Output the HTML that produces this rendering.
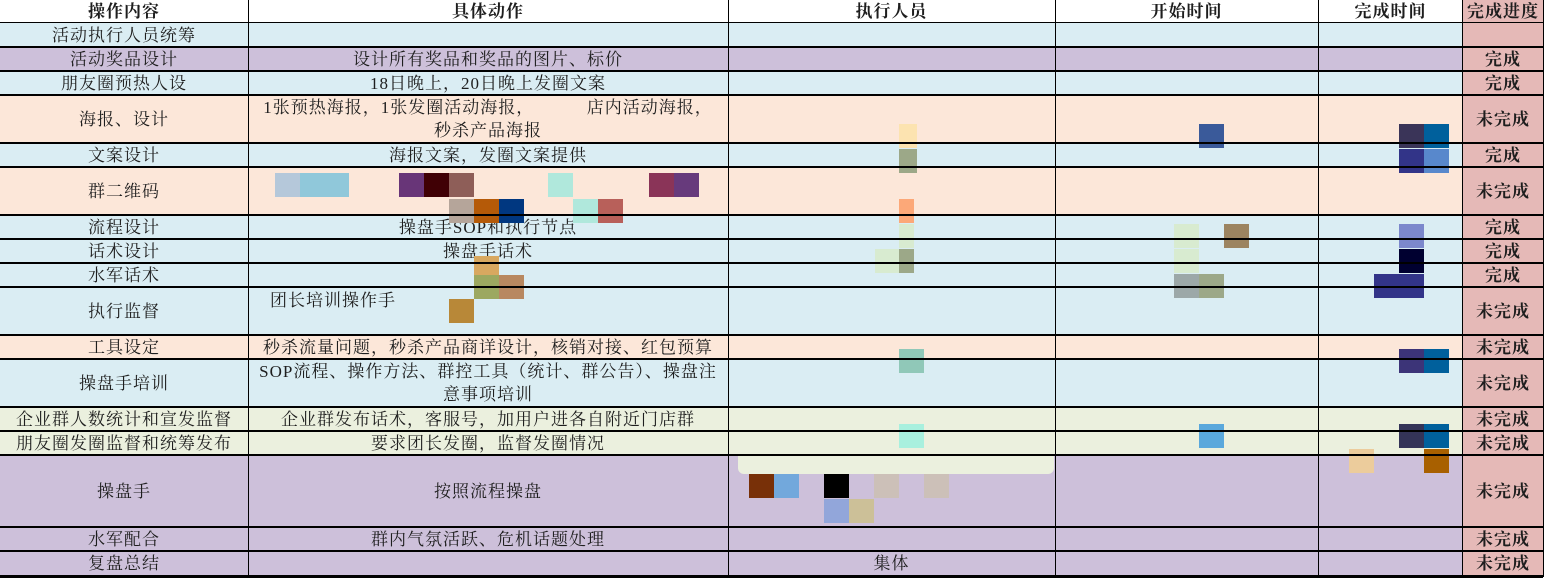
<!DOCTYPE html>
<html><head><meta charset="utf-8"><style>
body{margin:0;width:1548px;height:581px;background:#fff;position:relative;overflow:hidden;font-family:"Liberation Serif","Noto Serif CJK SC",serif;color:#1e1e1e;}
.r{position:absolute;left:0;width:1543px;}
.c{position:absolute;top:0;bottom:0;display:flex;align-items:center;justify-content:center;text-align:center;font-size:17px;letter-spacing:1px;line-height:23px;}
.c1{left:0;width:248px}.c2{left:248px;width:480px}.c3{left:728px;width:327px}
.c6{left:1463px;width:80px;background:#e5b9b7;font-weight:bold}
.hl{position:absolute;left:0;width:1543px;height:2px;background:#000}
.vl{position:absolute;top:0;height:577px;width:1px;background:#000}
.h{font-weight:bold}
.m{position:absolute;width:25px;height:24px}
</style></head><body>
<div class="r" style="top:0;height:23px;background:#fff">
<div class="c c1 h">操作内容</div><div class="c c2 h">具体动作</div><div class="c c3 h">执行人员</div>
<div class="c h" style="left:1055px;width:263px">开始时间</div><div class="c h" style="left:1318px;width:145px">完成时间</div>
<div class="c c6">完成进度</div></div>

<div class="r" style="top:23px;height:24px;background:#daedf3"><div class="c c1">活动执行人员统筹</div><div class="c c6"></div></div>
<div class="r" style="top:47px;height:24px;background:#cdc0da"><div class="c c1">活动奖品设计</div><div class="c c2">设计所有奖品和奖品的图片、标价</div><div class="c c6">完成</div></div>
<div class="r" style="top:71px;height:24px;background:#daedf3"><div class="c c1">朋友圈预热人设</div><div class="c c2">18日晚上，20日晚上发圈文案</div><div class="c c6">完成</div></div>
<div class="r" style="top:95px;height:48px;background:#fce7d9"><div class="c c1">海报、设计</div><div class="c c2">1张预热海报，1张发圈活动海报，&nbsp;&nbsp;&nbsp;&nbsp;&nbsp;&nbsp;&nbsp;&nbsp;&nbsp;&nbsp;店内活动海报，<br>秒杀产品海报</div><div class="c c6">未完成</div></div>
<div class="r" style="top:143px;height:24px;background:#daedf3"><div class="c c1">文案设计</div><div class="c c2">海报文案，发圈文案提供</div><div class="c c6">完成</div></div>
<div class="r" style="top:167px;height:48px;background:#fce7d9"><div class="c c1">群二维码</div><div class="c c6">未完成</div></div>
<div class="r" style="top:215px;height:24px;background:#daedf3"><div class="c c1">流程设计</div><div class="c c2">操盘手SOP和执行节点</div><div class="c c6">完成</div></div>
<div class="r" style="top:239px;height:24px;background:#daedf3"><div class="c c1">话术设计</div><div class="c c2">操盘手话术</div><div class="c c6">完成</div></div>
<div class="r" style="top:263px;height:24px;background:#daedf3"><div class="c c1">水军话术</div><div class="c c6">完成</div></div>
<div class="r" style="top:287px;height:48px;background:#daedf3"><div class="c c1">执行监督</div><div class="c c2" style="justify-content:flex-start;padding-left:22px;align-items:flex-start;padding-top:2px;width:458px">团长培训操作手</div><div class="c c6">未完成</div></div>
<div class="r" style="top:335px;height:24px;background:#fce7d9"><div class="c c1">工具设定</div><div class="c c2">秒杀流量问题，秒杀产品商详设计，核销对接、红包预算</div><div class="c c6">未完成</div></div>
<div class="r" style="top:359px;height:48px;background:#daedf3"><div class="c c1">操盘手培训</div><div class="c c2">SOP流程、操作方法、群控工具（统计、群公告）、操盘注<br>意事项培训</div><div class="c c6">未完成</div></div>
<div class="r" style="top:407px;height:24px;background:#ebf0de"><div class="c c1">企业群人数统计和宣发监督</div><div class="c c2">企业群发布话术，客服号，加用户进各自附近门店群</div><div class="c c6">未完成</div></div>
<div class="r" style="top:431px;height:24px;background:#ebf0de"><div class="c c1">朋友圈发圈监督和统筹发布</div><div class="c c2">要求团长发圈，监督发圈情况</div><div class="c c6">未完成</div></div>
<div class="r" style="top:455px;height:72px;background:#cdc0da"><div class="c c1">操盘手</div><div class="c c2">按照流程操盘</div><div class="c c6">未完成</div></div>
<div class="r" style="top:527px;height:24px;background:#cdc0da"><div class="c c1">水军配合</div><div class="c c2">群内气氛活跃、危机话题处理</div><div class="c c6">未完成</div></div>
<div class="r" style="top:551px;height:25px;background:#cdc0da"><div class="c c1">复盘总结</div><div class="c c3">集体</div><div class="c c6">未完成</div></div>

<div style="position:absolute;left:738px;top:455px;width:316px;height:19px;background:#ebf0de;border-radius:0 0 6px 6px"></div>

<!-- mosaic -->
<div class="m" style="left:275px;top:173px;background:#b5c8da"></div><div class="m" style="left:300px;top:173px;width:49px;background:#90c8da"></div>
<div class="m" style="left:399px;top:173px;background:#683578"></div><div class="m" style="left:424px;top:173px;background:#400005"></div><div class="m" style="left:449px;top:173px;background:#8e5e58"></div>
<div class="m" style="left:548px;top:173px;background:#b0e8dc"></div><div class="m" style="left:649px;top:173px;background:#8a3458"></div><div class="m" style="left:674px;top:173px;background:#673a7c"></div>
<div class="m" style="left:449px;top:199px;background:#b5a59a"></div><div class="m" style="left:474px;top:199px;background:#b55a08"></div><div class="m" style="left:499px;top:199px;background:#003780"></div>
<div class="m" style="left:573px;top:199px;background:#b0e8dc"></div><div class="m" style="left:598px;top:199px;background:#b8605a"></div>
<div class="m" style="left:474px;top:256px;background:#d8a860"></div><div class="m" style="left:474px;top:275px;background:#9ca860"></div><div class="m" style="left:499px;top:275px;background:#b88860"></div><div class="m" style="left:449px;top:299px;background:#b88838"></div>
<div class="m" style="left:899px;top:124px;width:18px;background:#fce3b0"></div><div class="m" style="left:899px;top:149px;width:18px;background:#9ca888"></div>
<div class="m" style="left:899px;top:199px;width:15px;background:#fca878"></div><div class="m" style="left:899px;top:224px;width:15px;background:#d8ebd0"></div><div class="m" style="left:875px;top:249px;background:#d8ebd0"></div><div class="m" style="left:899px;top:249px;width:15px;background:#9ca888"></div>
<div class="m" style="left:899px;top:349px;background:#90c8b8"></div><div class="m" style="left:899px;top:424px;background:#a8f0de"></div>
<div class="m" style="left:749px;top:474px;background:#783008"></div><div class="m" style="left:774px;top:474px;background:#72a8dc"></div><div class="m" style="left:824px;top:474px;background:#000"></div><div class="m" style="left:874px;top:474px;background:#ccc0b8"></div><div class="m" style="left:924px;top:474px;background:#ccc0b8"></div>
<div class="m" style="left:824px;top:499px;background:#92a6da"></div><div class="m" style="left:849px;top:499px;background:#ccc098"></div>
<div class="m" style="left:1199px;top:124px;background:#3a5a9a"></div><div class="m" style="left:1174px;top:224px;background:#d8ebd0"></div><div class="m" style="left:1174px;top:249px;background:#d8ebd0"></div><div class="m" style="left:1224px;top:224px;background:#9c8460"></div>
<div class="m" style="left:1174px;top:274px;background:#9ca8a8"></div><div class="m" style="left:1199px;top:274px;background:#9ca888"></div><div class="m" style="left:1199px;top:424px;background:#5aa8dc"></div>
<div class="m" style="left:1399px;top:124px;background:#3a3458"></div><div class="m" style="left:1424px;top:124px;background:#00609c"></div><div class="m" style="left:1399px;top:149px;background:#323488"></div><div class="m" style="left:1424px;top:149px;background:#5888cc"></div>
<div class="m" style="left:1399px;top:224px;background:#7c88cc"></div><div class="m" style="left:1399px;top:249px;background:#000030"></div><div class="m" style="left:1374px;top:274px;width:50px;background:#323488"></div>
<div class="m" style="left:1399px;top:349px;background:#3c3478"></div><div class="m" style="left:1424px;top:349px;background:#00609c"></div>
<div class="m" style="left:1399px;top:424px;background:#343458"></div><div class="m" style="left:1424px;top:424px;background:#00609c"></div>
<div class="m" style="left:1349px;top:449px;background:#eccc9c"></div><div class="m" style="left:1424px;top:449px;background:#a86000"></div>

<!-- lines -->
<div class="hl" style="top:22px;height:1px"></div>
<div class="hl" style="top:46px"></div><div class="hl" style="top:70px"></div><div class="hl" style="top:94px"></div><div class="hl" style="top:142px"></div><div class="hl" style="top:166px"></div><div class="hl" style="top:214px"></div><div class="hl" style="top:238px"></div><div class="hl" style="top:262px"></div><div class="hl" style="top:286px"></div><div class="hl" style="top:334px"></div><div class="hl" style="top:358px"></div><div class="hl" style="top:406px"></div><div class="hl" style="top:430px"></div><div class="hl" style="top:454px"></div><div class="hl" style="top:526px"></div><div class="hl" style="top:550px"></div>
<div class="hl" style="top:575px;height:3px"></div>
<div class="vl" style="left:248px"></div><div class="vl" style="left:728px"></div><div class="vl" style="left:1055px"></div><div class="vl" style="left:1318px"></div><div class="vl" style="left:1462px"></div><div class="vl" style="left:1543px"></div>
</body></html>
